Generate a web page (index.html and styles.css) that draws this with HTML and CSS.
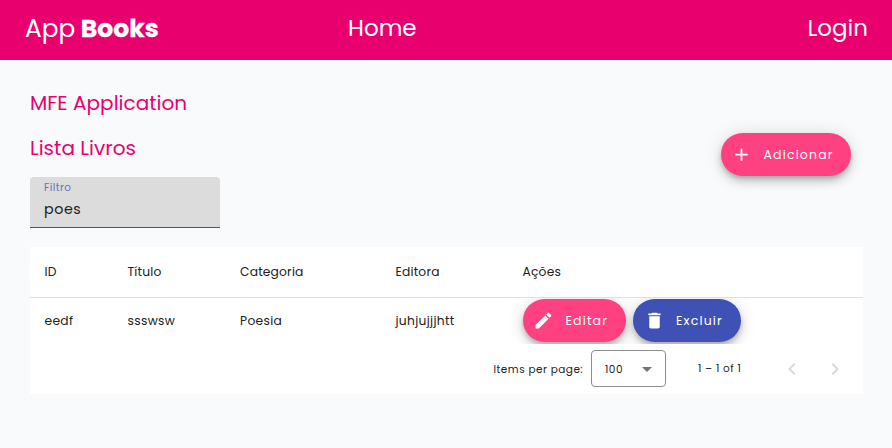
FILE: index.html
```html
<!DOCTYPE html>
<html lang="pt">
<head>
<meta charset="utf-8">
<title>App Books</title>
<link rel="stylesheet" href="styles.css">
</head>
<body>
<header class="topbar">
  <div class="brand"><span class="brand-light">App</span><span class="brand-bold">Books</span></div>
  <a class="nav-home"><span>Home</span></a>
  <a class="nav-login"><span>Login</span></a>
</header>
<main>
  <h1><span>MFE Application</span></h1>
  <div class="list-head">
    <h2><span>Lista Livros</span></h2>
    <button class="fab fab-add">
      <svg class="icon" viewBox="0 0 24 24"><path d="M19 13h-6v6h-2v-6H5v-2h6V5h2v6h6z"/></svg>
      <span>Adicionar</span>
    </button>
  </div>
  <label class="field"><span class="field-label">Filtro</span><span class="field-value">poes</span></label>
  <section class="table">
    <div class="row head"><span>ID</span><span>Título</span><span>Categoria</span><span>Editora</span><span>Ações</span></div>
    <div class="row data"><span>eedf</span><span>ssswsw</span><span>Poesia</span><span>juhjujjjhtt</span>
      <div class="actions">
        <button class="fab fab-edit">
          <svg class="icon" viewBox="0 0 24 24"><path d="M3 17.25V21h3.75L17.81 9.94l-3.75-3.75L3 17.25zM20.71 7.04a1 1 0 0 0 0-1.41l-2.34-2.34a1 1 0 0 0-1.41 0l-1.83 1.83 3.75 3.75 1.83-1.83z"/></svg>
          <span>Editar</span>
        </button>
        <button class="fab fab-delete">
          <svg class="icon" viewBox="0 0 24 24"><path d="M6 19c0 1.1.9 2 2 2h8c1.1 0 2-.9 2-2V7H6v12zM19 4h-3.5l-1-1h-5l-1 1H5v2h14V4z"/></svg>
          <span>Excluir</span>
        </button>
      </div>
    </div>
    <div class="paginator">
      <span class="per-page">Items per page:</span>
      <div class="select"><span>100</span><i class="caret"></i></div>
      <span class="range">1 – 1 of 1</span>
      <svg class="chev" viewBox="0 0 24 24"><path d="M15.41 7.41L14 6l-6 6 6 6 1.41-1.41L10.83 12z"/></svg>
      <svg class="chev" viewBox="0 0 24 24"><path d="M10 6L8.59 7.41 13.17 12l-4.58 4.59L10 18l6-6z"/></svg>
    </div>
  </section>
</main>
</body>
</html>
```
FILE: styles.css
```css
* { box-sizing: border-box; }
body { margin: 0; background: #f9fafc; color: #212121; font-family: Poppins, Inter, sans-serif; font-size: 12.25px; }
.topbar { height: 60px; background: #e9006f; color: #fff; display: grid; grid-template-columns: 323px 1fr auto; align-items: center; padding: 0 24px 4px 25px; font-size: 23px; font-weight: 400; }
.brand { display: flex; gap: 5.5px; padding-top: 1px; font-size: 25px; }
.brand-light { font-size: 24.8px; }
.brand-bold { font-weight: 700; -webkit-text-stroke: .3px #fff; letter-spacing: .05px; }
main { padding: 28px 29px 0 30px; }
h1, h2 { margin: 0; color: #e9006f; font-size: 20px; font-weight: 400; line-height: 30px; letter-spacing: .03px; }
.list-head { display: flex; justify-content: space-between; align-items: flex-start; padding: 15px 12px 0 0; height: 59px; }
.fab { display: flex; align-items: center; height: 43px; border: 0; border-radius: 22px; color: #fff; background: #ff4081; font: inherit; font-size: 12.5px; padding: 0 0 0 10px; letter-spacing: 1.15px; box-shadow: 0 3px 5px -1px rgba(0,0,0,.2), 0 6px 10px rgba(0,0,0,.14), 0 1px 18px rgba(0,0,0,.12); }
.icon { width: 21px; height: 21px; fill: currentColor; flex: none; }
.fab span { margin-left: 11.5px; }
.fab-add { width: 130px; }
.fab-edit { width: 103px; }
.fab-edit span { margin-left: 12px; }
.fab-delete { width: 108px; padding-left: 11px; background: #3f51b5; }
.field { display: flex; flex-direction: column; width: 190px; height: 51px; padding: 3px 14px 0; background: #dcdcdc; border-bottom: 1px solid #3f51b5; border-radius: 4px 4px 0 0; }
.field-label { color: #6672bd; font-size: 10.5px; line-height: 15px; letter-spacing: .4px; }
.field-value { font-size: 14.3px; line-height: 28px; letter-spacing: .55px; }
.table { margin-top: 19px; height: 147px; background: #fff; }
.row { display: grid; grid-template-columns: 83px 112.5px 155.5px 127px 1fr; align-items: center; padding-left: 14.5px; }
.head { height: 51px; border-bottom: 1px solid #e0e0e0; letter-spacing: .2px; }
.data { height: 46px; overflow: hidden; letter-spacing: .32px; }
.actions { display: flex; gap: 7px; align-self: start; margin-top: 1px; }
.paginator { display: flex; align-items: center; height: 49px; padding-left: 463.5px; font-size: 10.5px; letter-spacing: .48px; }
.per-page { width: 97.5px; padding-top: 2px; }
.select { width: 75px; height: 37px; border: 1px solid #8e8e8e; border-radius: 4px; display: flex; align-items: center; justify-content: space-between; flex: none; padding: 2px 13px 0; }
.caret { border: 5px solid transparent; border-top-color: #757575; border-bottom: 0; }
.range { width: 82px; margin-left: 32px; }
.chev { width: 24px; height: 24px; fill: #dadada; margin-right: 19px; flex: none; }
.per-page, .range { flex: none; }
```
